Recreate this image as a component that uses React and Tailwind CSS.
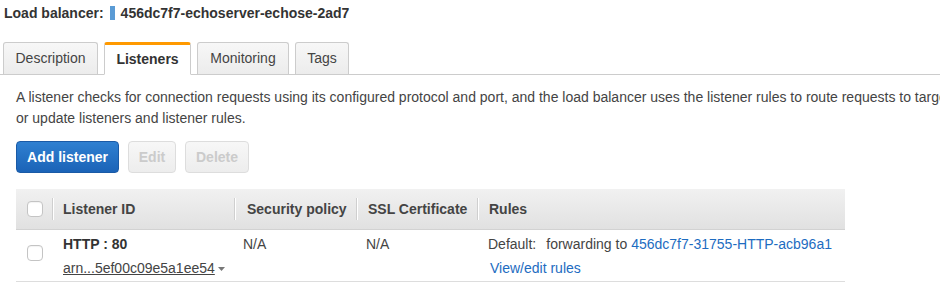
import React from "react";

const tabs = [
  { name: "Description", w: "w-[95px]" },
  { name: "Listeners", w: "w-[87px]", active: true },
  { name: "Monitoring", w: "w-[92px]" },
  { name: "Tags", w: "w-[54px]" },
];

function Checkbox() {
  return (
    <span className="block w-[16px] h-[16px] rounded-[4px] border border-[#c4c4c4] bg-white shadow-[inset_0_1px_1px_rgba(0,0,0,0.05)]" />
  );
}

function HeaderCell({ children, pad = "pl-[10px]" }) {
  return (
    <div className="flex items-center h-full">
      <span className="block w-px h-[22px] bg-[#cfcfcf] border-r border-white box-content" />
      <span className={`${pad} font-bold text-[#444]`}>{children}</span>
    </div>
  );
}

export default function App() {
  return (
    <div className="w-[940px] h-[299px] overflow-hidden bg-white text-[14px] text-[#444] font-['Liberation_Sans',Arial,sans-serif]">
      {/* Titulo */}
      <div className="flex items-center pt-[5px] pl-[4px] leading-4 font-bold text-[#333]">
        <span>Load balancer:</span>
        <span className="ml-[6px] w-[5px] h-[14px] bg-[#5a9bd5]" />
        <span className="ml-[6px]">456dc7f7-echoserver-echose-2ad7</span>
      </div>

      {/* Tabs */}
      <div className="mt-[21px] flex items-end gap-[6px] pl-[3px] border-b border-[#cccccc] h-[33px]">
        {tabs.map((t) =>
          t.active ? (
            <div
              key={t.name}
              className={`${t.w} h-[33px] -mb-px flex items-center justify-center bg-white border border-[#cccccc] border-t-[3px] border-t-[#f90] border-b-white rounded-t-[3px] font-bold text-[#333]`}
            >
              {t.name}
            </div>
          ) : (
            <div
              key={t.name}
              className={`${t.w} h-[32px] flex items-center justify-center bg-gradient-to-b from-[#f7f7f7] to-[#ececec] border border-[#cccccc] border-b-0 rounded-t-[3px] text-[#444]`}
            >
              {t.name}
            </div>
          )
        )}
      </div>

      {/* Descripcion */}
      <p className="mt-[12px] pl-[16px] leading-[21px] whitespace-nowrap text-[#444]">
        A listener checks for connection requests using its configured protocol and port, and the load balancer uses the listener rules to route requests to targets. You can add, remove,
        <br />
        or update listeners and listener rules.
      </p>

      {/* Botones */}
      <div className="mt-[12px] ml-[16px] flex gap-[9px]">
        <button className="w-[103px] h-[32px] rounded-[4px] border border-[#1a5aa6] bg-gradient-to-b from-[#2f80d1] to-[#1b63b7] text-white font-bold">
          Add listener
        </button>
        <button className="w-[48px] h-[32px] rounded-[4px] border border-[#dddddd] bg-gradient-to-b from-[#f7f7f7] to-[#ededed] text-[#cbcbcb] font-bold">
          Edit
        </button>
        <button className="w-[64px] h-[32px] rounded-[4px] border border-[#dddddd] bg-gradient-to-b from-[#f7f7f7] to-[#ededed] text-[#cbcbcb] font-bold">
          Delete
        </button>
      </div>

      {/* Tabla */}
      <div className="mt-[16px] ml-[16px] w-[829px]">
        <div className="grid grid-cols-[36px_182px_122px_121px_1fr] h-[41px] bg-gradient-to-b from-[#f1f1f1] to-[#e1e1e1] border-b border-[#d2d2d2]">
          <div className="flex items-center pl-[11px]">
            <Checkbox />
          </div>
          <HeaderCell pad="pl-[9px]">Listener ID</HeaderCell>
          <HeaderCell pad="pl-[11px]">Security policy</HeaderCell>
          <HeaderCell pad="pl-[10px]">SSL Certificate</HeaderCell>
          <HeaderCell pad="pl-[10px]">Rules</HeaderCell>
        </div>

        <div className="grid grid-cols-[36px_182px_122px_121px_1fr] h-[52px] border-b border-[#dddddd] leading-[18px]">
          <div className="pl-[11px] pt-[15px]">
            <Checkbox />
          </div>
          <div className="pl-[11px] pt-[5px]">
            <div className="font-bold text-[#333]">HTTP : 80</div>
            <div className="mt-[6px] flex items-center">
              <span className="underline text-[#444]">arn...5ef00c09e5a1ee54</span>
              <svg width="7" height="4" viewBox="0 0 7 4" className="ml-[3px] mt-[1px]">
                <path d="M0 0h7L3.5 4z" fill="#777" />
              </svg>
            </div>
          </div>
          <div className="pl-[9px] pt-[5px]">N/A</div>
          <div className="pl-[10px] pt-[5px]">N/A</div>
          <div className="pl-[11px] pt-[5px]">
            <div className="flex whitespace-nowrap">
              <span>Default:</span>
              <span className="ml-[10px]">forwarding to</span>
              <span className="ml-[4px] text-[#1d6cc1]">456dc7f7-31755-HTTP-acb96a1</span>
            </div>
            <div className="mt-[6px] pl-[2px] text-[#1d6cc1]">View/edit rules</div>
          </div>
        </div>
      </div>
    </div>
  );
}
